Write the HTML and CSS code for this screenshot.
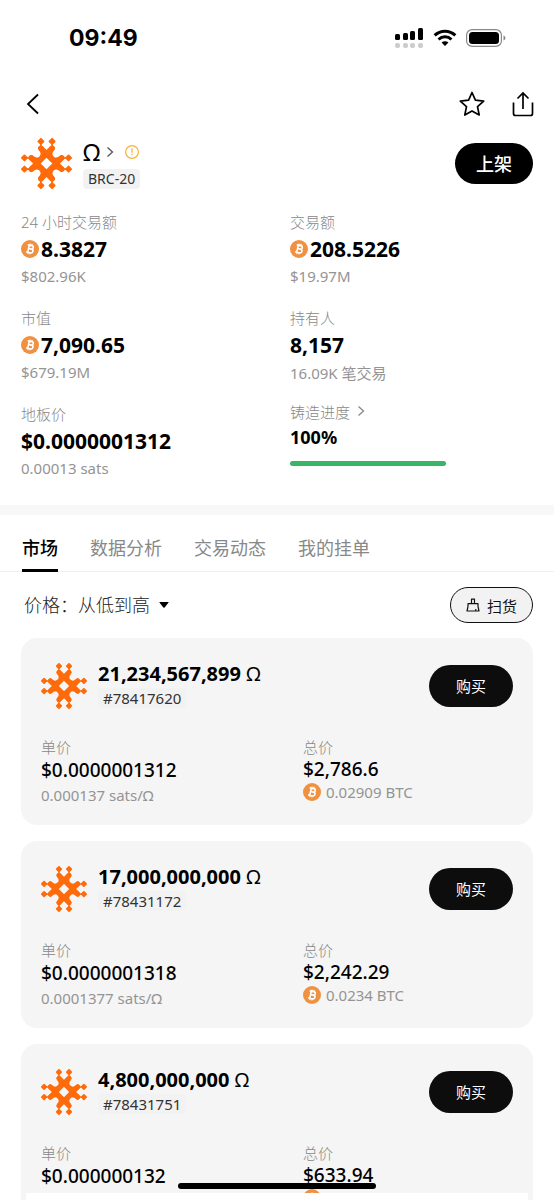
FILE: index.html
```html
<!DOCTYPE html>
<html lang="zh-CN">
<head>
	<meta charset="UTF-8">
	<meta name="viewport" content="width=device-width, initial-scale=1">
	<title>Ω BRC-20</title>
	<link rel="stylesheet" href="styles.css">
</head>
<body>
<svg class="sprite" aria-hidden="true">
	<symbol id="token" viewBox="-26 -26 52 52">
		<g fill="none" stroke="#ff6b0a" stroke-width="5.6" stroke-linecap="round">
			<path d="M-5.7-15.5 15.5 5.7M5.7-15.5-15.5 5.7M-15.5-5.7 5.7 15.5M15.5-5.7-5.7 15.5"/>
			<path d="M-5.7-15.5C1-8-8 1-15.5-5.7M5.7-15.5C-1-8 8 1 15.5-5.7M-5.7 15.5C1 8-8-1-15.5 5.7M5.7 15.5C-1 8 8-1 15.5 5.7"/>
		</g>
		<path fill="none" stroke="#ff6b0a" stroke-width="1.6" d="M-5.7-23v8M5.7-23v8M-5.7 23v-8M5.7 23v-8M-23-5.7h8M-23 5.7h8M23-5.7h-8M23 5.7h-8"/>
		<path fill="#ff6b0a" stroke="#ff6b0a" stroke-width="2" stroke-linejoin="round" d="M-5.7-25l2.500 2.500-2.500 2.500-2.500-2.500zM5.700-25l2.500 2.500-2.500 2.500-2.500-2.500zM-5.700 20l2.500 2.500-2.500 2.500-2.500-2.500zM5.700 20l2.500 2.500-2.500 2.500-2.500-2.500zM-22.500-8.200l2.500 2.500-2.500 2.500-2.500-2.500zM-22.500 3.200l2.500 2.500-2.500 2.500-2.500-2.500zM22.500-8.200l2.500 2.500-2.500 2.500-2.500-2.500zM22.500 3.200l2.500 2.500-2.500 2.500-2.500-2.500z"/>
	</symbol>
	<symbol id="btc" viewBox="0 0 18 18">
		<circle cx="9" cy="9" r="9" fill="#ef9140"/>
		<g transform="rotate(13 9 9)" fill="none" stroke="#fff" stroke-width="1.6">
			<path d="M5.8 5.3h4.3a1.7 1.7 0 0 1 0 3.5H7.3M7.3 8.8h3.2a1.9 1.9 0 0 1 0 3.8H5.8M7.5 5.3v7.3"/>
			<path stroke-width="1.2" d="M8 3.6v1.6M10 3.6v1.6M8 12.8v1.6M10 12.8v1.6"/>
		</g>
	</symbol>
	<symbol id="chevron" viewBox="0 0 8 12">
		<path d="M1.5 1.5 6.5 6l-5 4.5" fill="none" stroke="currentColor" stroke-width="1.3"/>
	</symbol>
</svg>

<div class="app">
	<div class="status-bar">
		<span class="time">09:49</span>
		<div class="status-icons">
			<svg width="30" height="20" viewBox="0 0 30 20">
				<rect x="1" y="6" width="5" height="6" rx="1.5"/><rect x="9" y="5" width="5" height="7" rx="1.5"/>
				<rect x="16" y="3" width="5" height="9" rx="1.5"/><rect x="24" y="0" width="5" height="12" rx="1.5"/>
				<g fill="#ccc"><rect x="1" y="15" width="5" height="5" rx="2"/><rect x="9" y="15" width="5" height="5" rx="2"/><rect x="16" y="15" width="5" height="5" rx="2"/><rect x="24" y="15" width="5" height="5" rx="2"/></g>
			</svg>
			<svg width="24" height="18" viewBox="0 0 26 18">
				<path d="M1.8 6.2a16 16 0 0 1 22.4 0M6 10.6a10 10 0 0 1 14 0" fill="none" stroke="#000" stroke-width="3.2"/>
				<path d="M9.3 14a5.4 5.4 0 0 1 7.4 0L13 17.8z"/>
			</svg>
			<svg width="40" height="18" viewBox="0 0 40 18">
				<rect x=".6" y=".6" width="34.8" height="16.8" rx="5.5" fill="none" stroke="#888" stroke-width="1.2"/>
				<rect x="3" y="3" width="30" height="12" rx="3.5"/>
				<path d="M37.500 6.500v5c2.600-.8 2.600-4.200 0-5z" fill="#888"/>
			</svg>
		</div>
	</div>

	<nav class="nav">
		<button class="icon-btn" aria-label="返回">
			<svg width="22" height="24" viewBox="0 0 22 24"><path d="m17 2.500-10 9.500 10 9.500" fill="none" stroke="#000" stroke-width="1.800"/></svg>
		</button>
		<div class="nav-right">
			<button class="icon-btn" aria-label="收藏">
				<svg width="26" height="26" viewBox="0 0 26 26"><path d="m13 1.500 3.400 7.700 8.300.9-6.200 5.600 1.700 8.300L13 19.900 5.800 24l1.700-8.300-6.200-5.600 8.300-.9z" fill="none" stroke="#000" stroke-width="1.700" stroke-linejoin="round"/></svg>
			</button>
			<button class="icon-btn" aria-label="分享">
				<svg width="22" height="26" viewBox="0 0 22 26"><path d="M1.500 11.500v11a2 2 0 0 0 2 2h15a2 2 0 0 0 2-2v-11M11 18V2M5.500 7.500 11 2l5.500 5.500" fill="none" stroke="#000" stroke-width="1.700"/></svg>
			</button>
		</div>
	</nav>

	<header class="token">
		<svg class="token-logo"><use href="#token"/></svg>
		<div class="token-info">
			<h1>Ω
				<svg class="chevron" width="8" height="12"><use href="#chevron"/></svg>
				<svg width="14" height="14" viewBox="0 0 14 14"><circle cx="7" cy="7" r="6.4" fill="none" stroke="#f5b335" stroke-width="1.2"/><path d="M7 3.500v4.200M7 8.800v1.500" stroke="#f5b335" stroke-width="1.300"/></svg>
			</h1>
			<span class="tag">BRC-20</span>
		</div>
		<button class="btn btn-list">上架</button>
	</header>

	<section class="stats">
		<div class="stat">
			<div class="label">24 小时交易额</div>
			<div class="value"><svg class="btc"><use href="#btc"/></svg>8.3827</div>
			<div class="sub">$802.96K</div>
		</div>
		<div class="stat">
			<div class="label">交易额</div>
			<div class="value"><svg class="btc"><use href="#btc"/></svg>208.5226</div>
			<div class="sub">$19.97M</div>
		</div>
		<div class="stat">
			<div class="label">市值</div>
			<div class="value"><svg class="btc"><use href="#btc"/></svg>7,090.65</div>
			<div class="sub">$679.19M</div>
		</div>
		<div class="stat">
			<div class="label">持有人</div>
			<div class="value">8,157</div>
			<div class="sub">16.09K 笔交易</div>
		</div>
		<div class="stat">
			<div class="label">地板价</div>
			<div class="value">$0.0000001312</div>
			<div class="sub">0.00013 sats</div>
		</div>
		<div class="stat mint">
			<div class="label">铸造进度 <svg class="chevron" width="8" height="12"><use href="#chevron"/></svg></div>
			<div class="value">100%</div>
			<div class="bar"><div class="bar-fill" style="width: 100%"></div></div>
		</div>
	</section>

	<div class="tabs" role="tablist">
		<button class="tab active" role="tab" aria-selected="true">市场</button>
		<button class="tab" role="tab">数据分析</button>
		<button class="tab" role="tab">交易动态</button>
		<button class="tab" role="tab">我的挂单</button>
	</div>

	<div class="filter">
		<div class="sort">
			<label for="sort">价格：</label>
			<select id="sort">
				<option>从低到高</option>
				<option>从高到低</option>
			</select>
			<svg class="caret" width="10" height="6" viewBox="0 0 10 6"><path d="M1 0h8q1 0 .4.800L5.600 5.500q-.6.700-1.200 0L.6.800Q0 0 1 0z"/></svg>
		</div>
		<button class="btn-sweep">
			<svg width="14" height="14" viewBox="0 0 14 14"><path d="M5.500 5V1.200h3V5M2 8.500V5.700h10v2.800M2 8.500 1 13h12l-1-4.500M9.800 13v-2" fill="none" stroke="#111" stroke-width="1.200" stroke-linejoin="round"/></svg>
			扫货
		</button>
	</div>

	<main class="orders">
		<article class="order">
			<div class="order-head">
				<svg class="order-logo"><use href="#token"/></svg>
				<div class="order-info">
					<h2>21,234,567,899 <span>Ω</span></h2>
					<span class="tag">#78417620</span>
				</div>
				<button class="btn btn-buy">购买</button>
			</div>
			<div class="order-body">
				<div>
					<div class="label">单价</div>
					<div class="price">$0.0000001312</div>
					<div class="sub">0.000137 sats/Ω</div>
				</div>
				<div class="total">
					<div class="label">总价</div>
					<div class="price">$2,786.6</div>
					<div class="sub"><svg class="btc"><use href="#btc"/></svg>0.02909 BTC</div>
				</div>
			</div>
		</article>
		<article class="order">
			<div class="order-head">
				<svg class="order-logo"><use href="#token"/></svg>
				<div class="order-info">
					<h2>17,000,000,000 <span>Ω</span></h2>
					<span class="tag">#78431172</span>
				</div>
				<button class="btn btn-buy">购买</button>
			</div>
			<div class="order-body">
				<div>
					<div class="label">单价</div>
					<div class="price">$0.0000001318</div>
					<div class="sub">0.0001377 sats/Ω</div>
				</div>
				<div class="total">
					<div class="label">总价</div>
					<div class="price">$2,242.29</div>
					<div class="sub"><svg class="btc"><use href="#btc"/></svg>0.0234 BTC</div>
				</div>
			</div>
		</article>
		<article class="order">
			<div class="order-head">
				<svg class="order-logo"><use href="#token"/></svg>
				<div class="order-info">
					<h2>4,800,000,000 <span>Ω</span></h2>
					<span class="tag">#78431751</span>
				</div>
				<button class="btn btn-buy">购买</button>
			</div>
			<div class="order-body">
				<div>
					<div class="label">单价</div>
					<div class="price">$0.000000132</div>
				</div>
				<div class="total">
					<div class="label">总价</div>
					<div class="price">$633.94</div>
					<div class="sub"><svg class="btc"><use href="#btc"/></svg>0.0061142 BTC</div>
				</div>
			</div>
		</article>
	</main>
	<div class="bottom-sheet"></div>
	<div class="home-indicator"></div>
</div>
</body>
</html>
```

FILE: styles.css
```css
* {
	box-sizing: border-box;
}
body {
	margin: 0;
	background: #fff;
	color: #000;
	font-family: "Noto Sans", "Noto Sans CJK SC", sans-serif;
	font-size: 15px;
}
h1, h2 {
	margin: 0;
	font-weight: normal;
}
button, select {
	border: none;
	padding: 0;
	background: none;
	color: inherit;
	font: inherit;
	cursor: pointer;
}
svg {
	display: block;
	flex: none;
}
.sprite {
	position: absolute;
	width: 0;
	height: 0;
}
.app {
	position: relative;
	height: 100vh;
	overflow: hidden;
}

/* status bar + nav */
.status-bar {
	display: flex;
	align-items: center;
	justify-content: space-between;
	height: 76px;
	padding: 0 48px 0 69px;
}
.time {
	font-family: Inter, sans-serif;
	font-size: 23px;
	font-weight: 700;
}
.status-icons {
	display: flex;
	align-items: center;
	gap: 9px;
}
.nav {
	display: flex;
	align-items: center;
	justify-content: space-between;
	height: 56px;
	padding: 0 20px 0 21px;
}
.nav-right {
	display: flex;
	gap: 27px;
}

/* token */
.token {
	display: flex;
	align-items: center;
	gap: 11px;
	height: 62px;
	padding: 0 21px;
}
.token-logo {
	width: 51px;
	height: 51px;
}
.token-info {
	flex: 1;
}
.token h1 {
	display: flex;
	align-items: center;
	gap: 6px;
	height: 32px;
	padding-bottom: 3px;
	font-size: 24px;
}
.chevron {
	color: #555;
}
.token h1 .chevron {
	margin-right: 5px;
}
.tag {
	display: block;
	width: fit-content;
	padding: 0 5px;
	border-radius: 4px;
	background: #f2f2f2;
	color: #333;
	font-size: 14px;
	line-height: 20px;
}
.btn {
	border-radius: 21px;
	background: #0d0d0d;
	color: #fff;
}
.btn-list {
	width: 78px;
	height: 41px;
	background: #000;
	font-size: 18px;
	font-weight: 500;
}

/* stats */
.stats {
	display: grid;
	grid-template-columns: 1fr 1fr;
	gap: 17px 26px;
	padding: 15px 21px 25px;
	border-bottom: 10px solid #f8f8f8;
}
.label, .sub {
	display: flex;
	align-items: center;
	color: #949494;
}
.label {
	color: #888;
	font-weight: 300;
}
.stat .label, .stat .sub {
	height: 24px;
}
.value {
	display: flex;
	align-items: center;
	gap: 2px;
	height: 31px;
	font-size: 21px;
	font-weight: 700;
}
.btc {
	width: 18px;
	height: 18px;
}
.mint .label {
	gap: 7px;
	height: 20px;
}
.mint .chevron {
	color: #888;
}
.mint .value {
	height: 32px;
	font-size: 18px;
}
.bar {
	width: 64%;
	height: 5px;
	margin-top: 8px;
	border-radius: 3px;
	background: #eee;
}
.bar-fill {
	height: 100%;
	border-radius: 3px;
	background: #35b767;
}

/* tabs */
.tabs {
	display: flex;
	gap: 32px;
	height: 57px;
	padding: 0 22px;
	border-bottom: 1px solid #eee;
}
.tab {
	height: 57px;
	padding-top: 10px;
	border-bottom: 3px solid transparent;
	color: #888;
	font-size: 18px;
}
.tab.active {
	border-color: #000;
	color: #000;
	font-weight: 500;
}

/* filter */
.filter {
	display: flex;
	align-items: center;
	justify-content: space-between;
	height: 66px;
	padding: 0 21px 0 24px;
}
.sort {
	display: flex;
	align-items: center;
	color: #222;
	font-size: 18px;
	font-weight: 300;
	line-height: 26px;
}
.sort select {
	height: 26px;
	appearance: none;
}
.caret {
	margin-left: 9px;
}
.btn-sweep {
	display: flex;
	align-items: center;
	justify-content: center;
	gap: 7px;
	width: 83px;
	height: 36px;
	border: 1px solid #111;
	border-radius: 18px;
	background: #f2f2f2;
	color: #111;
}

/* orders */
.orders {
	display: flex;
	flex-direction: column;
	gap: 16px;
	padding: 0 21px;
}
.order {
	padding: 24px 20px 19px;
	border-radius: 16px;
	background: #f5f5f5;
}
.order-head {
	display: flex;
	align-items: center;
	gap: 11px;
	margin-bottom: 26px;
}
.order-logo {
	width: 46px;
	height: 46px;
}
.order-info {
	flex: 1;
	height: 47px;
}
.order h2 {
	font-size: 20px;
	font-weight: 700;
	line-height: 24px;
}
.order h2 span {
	font-weight: 400;
}
.order .tag {
	margin-top: 2px;
	font-size: 15px;
}
.btn-buy {
	width: 84px;
	height: 42px;
}
.order-body {
	display: grid;
	grid-template-columns: 1fr 1fr;
	gap: 52px;
}
.order-body .label, .order-body .sub {
	height: 22px;
}
.price {
	font-size: 19px;
	font-weight: 500;
	line-height: 27px;
}
.total .price {
	line-height: 24px;
}
.total .sub {
	gap: 5px;
}

/* pinned to the bottom of the screen */
.bottom-sheet {
	position: absolute;
	right: 26px;
	bottom: 0;
	left: 26px;
	height: 7px;
	background: #fff;
}
.home-indicator {
	position: absolute;
	bottom: 11px;
	left: 50%;
	width: 198px;
	height: 6px;
	border-radius: 3px;
	background: #000;
	transform: translateX(-50%);
}
```
